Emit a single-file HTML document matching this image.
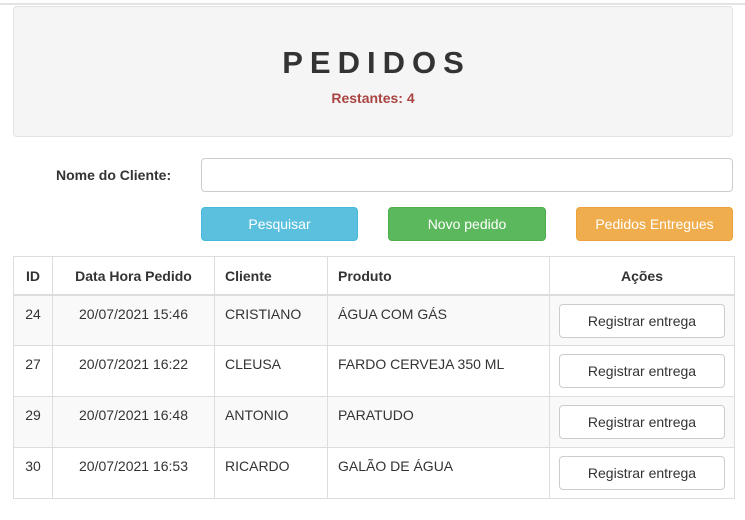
<!DOCTYPE html>
<html><head><meta charset="utf-8"><style>
*{box-sizing:border-box;margin:0;padding:0}
body{width:745px;height:520px;background:#fff;font-family:"Liberation Sans",Arial,sans-serif;font-size:14px;color:#333;position:relative;overflow:hidden}
.topline{position:absolute;left:0;top:3px;width:745px;height:2px;background:#e3e3e3}
.jumbo{position:absolute;left:13px;top:6px;width:720px;height:131px;background:#f5f5f5;border:1px solid #e3e3e3;border-radius:4px;text-align:center}
.jumbo h1{position:absolute;left:0;right:0;top:38px;font-size:31px;font-weight:bold;letter-spacing:7px;padding-left:7px;line-height:36px;color:#333}
.jumbo .r{position:absolute;left:0;right:0;top:83px;color:#a94442;font-weight:bold;font-size:14px}
.lbl{position:absolute;left:56px;top:167px;font-weight:bold}
.inp{position:absolute;left:201px;top:158px;width:532px;height:34px;border:1px solid #ccc;border-radius:4px}
.btn{position:absolute;top:207px;height:34px;border-radius:4px;color:#fff;text-align:center;line-height:32px;font-size:14px;border:1px solid}
.t{position:absolute;left:13px;top:256px;width:721px;border-collapse:collapse;table-layout:fixed}
.t td,.t th{border:1px solid #ddd;padding:0 10px;height:51px;vertical-align:top;line-height:20px;padding-top:8px}
.t th{height:38px;border-bottom:2px solid #ddd;text-align:left;padding-top:9px}
.t tr.s td{background:#f9f9f9}
.c{text-align:center!important}
.rb{display:block;width:166px;height:34px;border:1px solid #ccc;border-radius:4px;background:#fff;text-align:center;line-height:32px;margin:0 auto}
.t td.a{padding-top:8px;padding-left:8px;padding-right:8px}
</style></head><body>
<div class="topline"></div>
<div class="jumbo"><h1>PEDIDOS</h1><div class="r">Restantes: 4</div></div>
<div class="lbl">Nome do Cliente:</div>
<div class="inp"></div>
<div class="btn" style="left:201px;width:157px;background:#5bc0de;border-color:#46b8da">Pesquisar</div>
<div class="btn" style="left:388px;width:158px;background:#5cb85c;border-color:#4cae4c">Novo pedido</div>
<div class="btn" style="left:576px;width:157px;background:#f0ad4e;border-color:#eea236">Pedidos Entregues</div>
<table class="t">
<colgroup><col style="width:39px"><col style="width:162px"><col style="width:113px"><col style="width:222px"><col style="width:185px"></colgroup>
<tr><th class="c">ID</th><th class="c">Data Hora Pedido</th><th>Cliente</th><th>Produto</th><th class="c">Ações</th></tr>
<tr class="s"><td class="c">24</td><td class="c">20/07/2021 15:46</td><td>CRISTIANO</td><td>ÁGUA COM GÁS</td><td class="a"><span class="rb">Registrar entrega</span></td></tr>
<tr><td class="c">27</td><td class="c">20/07/2021 16:22</td><td>CLEUSA</td><td>FARDO CERVEJA 350 ML</td><td class="a"><span class="rb">Registrar entrega</span></td></tr>
<tr class="s"><td class="c">29</td><td class="c">20/07/2021 16:48</td><td>ANTONIO</td><td>PARATUDO</td><td class="a"><span class="rb">Registrar entrega</span></td></tr>
<tr><td class="c">30</td><td class="c">20/07/2021 16:53</td><td>RICARDO</td><td>GALÃO DE ÁGUA</td><td class="a"><span class="rb">Registrar entrega</span></td></tr>
</table>
</body></html>
